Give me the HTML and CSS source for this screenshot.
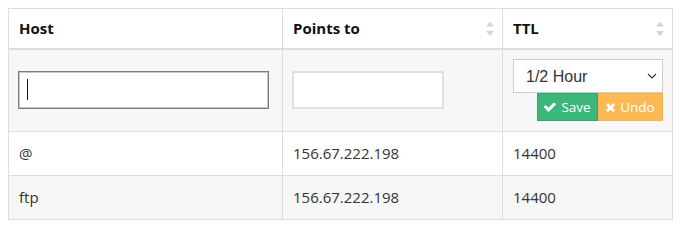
FILE: index.html
```html
<!DOCTYPE html>
<html>
<head>
<meta charset="utf-8">
<link rel="stylesheet" href="styles.css">
</head>
<body>
<table class="dns">
  <colgroup>
    <col class="c-host">
    <col class="c-points">
    <col class="c-ttl">
  </colgroup>
  <thead>
    <tr>
      <th><div class="th-inner"><span>Host</span></div></th>
      <th><div class="th-inner"><span>Points to</span>
        <svg class="sort" width="8" height="16" viewBox="0 0 8 16"><polygon points="4,0.5 8,5.5 0,5.5"/><polygon points="0,10 8,10 4,15"/></svg></div></th>
      <th><div class="th-inner"><span>TTL</span>
        <svg class="sort" width="8" height="16" viewBox="0 0 8 16"><polygon points="4,0.5 8,5.5 0,5.5"/><polygon points="0,10 8,10 4,15"/></svg></div></th>
    </tr>
  </thead>
  <tbody>
    <tr class="edit">
      <td><div class="field"><input class="inp inp-host" type="text"><span class="caret"></span></div></td>
      <td><input class="inp inp-points" type="text"></td>
      <td>
        <div class="ttl-box">
          <div class="sel-wrap">
            <select class="sel"><option>1/2 Hour</option></select>
            <svg class="chev" width="10" height="6" viewBox="0 0 10 6"><polyline points="1,1 5,5 9,1" fill="none" stroke="#333" stroke-width="1.2"/></svg>
          </div>
          <div class="btns">
            <button class="btn btn-save"><svg width="12" height="9" viewBox="143 400 1528 1160"><path fill="#fff" d="M1671 566q0 40-28 68l-724 724-136 136q-28 28-68 28t-68-28l-136-136-362-362q-28-28-28-68t28-68l136-136q28-28 68-28t68 28l294 295 656-657q28-28 68-28t68 28l136 136q28 28 28 68z"/></svg><span>Save</span></button><button class="btn btn-undo"><svg width="9" height="9" viewBox="110 330 1188 1224"><path fill="#fff" d="M1298 1322q0 40-28 68l-136 136q-28 28-68 28t-68-28l-294-294-294 294q-28 28-68 28t-68-28l-136-136q-28-28-28-68t28-68l294-294-294-294q-28-28-28-68t28-68l136-136q28-28 68-28t68 28l294 294 294-294q28-28 68-28t68 28l136 136q28 28 28 68t-28 68l-294 294 294 294q28 28 28 68z"/></svg><span>Undo</span></button>
          </div>
        </div>
      </td>
    </tr>
    <tr class="data">
      <td>@</td>
      <td>156.67.222.198</td>
      <td>14400</td>
    </tr>
    <tr class="data alt">
      <td>ftp</td>
      <td>156.67.222.198</td>
      <td>14400</td>
    </tr>
  </tbody>
</table>
</body>
</html>
```

FILE: styles.css
```css
html, body {
  margin: 0;
  background: #fff;
}
body {
  padding: 8px;
  font-family: "Open Sans", "Liberation Sans", sans-serif;
  font-size: 15px;
  color: #333;
}
.dns {
  width: 664px;
  border-collapse: collapse;
  table-layout: fixed;
  border: 1px solid #ddd;
}
.c-host { width: 274px; }
.c-points { width: 220px; }
.c-ttl { width: 170px; }

.dns th, .dns td {
  border: 1px solid #ddd;
  text-align: left;
  vertical-align: middle;
  line-height: 21px;
}
.dns th {
  padding: 9px 8px 9px 10px;
  font-weight: 700;
  color: #111;
  background: #fff;
  border-bottom: 2px solid #ddd;
}
.th-inner {
  display: flex;
  justify-content: space-between;
  align-items: center;
}
.sort {
  fill: #d4d4d4;
  display: block;
}
.edit td {
  background: #f7f7f7;
  padding: 9px 10px 10px 10px;
}
.data td {
  padding: 11px 10px;
  background: #fff;
}
.data.alt td {
  background: #f7f7f7;
}

.field {
  position: relative;
  width: 251px;
  margin-left: -1px;
}
.inp {
  box-sizing: border-box;
  height: 38px;
  display: block;
  margin: 0;
  background: #fff;
  font-family: "Open Sans", sans-serif;
  font-size: 15px;
  outline: none;
}
.inp-host {
  width: 251px;
  border: 1px solid #7d7d7d;
  box-shadow: inset 0 0 0 1px #c6c6c6;
}
.caret {
  position: absolute;
  left: 9px;
  top: 8px;
  width: 1px;
  height: 21px;
  background: #111;
}
.inp-points {
  width: 152px;
  border: 2px solid #e0e0e0;
  margin-left: -1px;
}

.ttl-box {
  display: flex;
  flex-direction: column;
  align-items: flex-end;
}
.sel-wrap {
  position: relative;
  width: 150px;
  align-self: flex-start;
}
.sel {
  appearance: none;
  -webkit-appearance: none;
  box-sizing: border-box;
  width: 150px;
  height: 34px;
  margin: 0;
  padding: 0 0 0 12px;
  border: 1px solid #ccc;
  border-radius: 0;
  background: #fff;
  font-family: "Liberation Sans", Arial, sans-serif;
  font-size: 16px;
  color: #333;
  display: block;
}
.chev {
  position: absolute;
  right: 6px;
  top: 14px;
}
.btns {
  display: flex;
  margin-right: -1px;
}
.btn {
  display: inline-flex;
  align-items: center;
  justify-content: center;
  gap: 5px;
  box-sizing: border-box;
  height: 28px;
  margin: 0;
  padding: 0;
  border: 1px solid transparent;
  border-radius: 0;
  color: #fff;
  font-family: "Open Sans", sans-serif;
  font-size: 13.5px;
  line-height: 26px;
  cursor: pointer;
}
.btn svg { display: block; }
.btn-save {
  width: 61px;
  background: #3cb77c;
  border-color: #33a970;
}
.btn-undo {
  width: 65px;
  background: #fdb955;
  border-color: #fbb34d;
}
```
